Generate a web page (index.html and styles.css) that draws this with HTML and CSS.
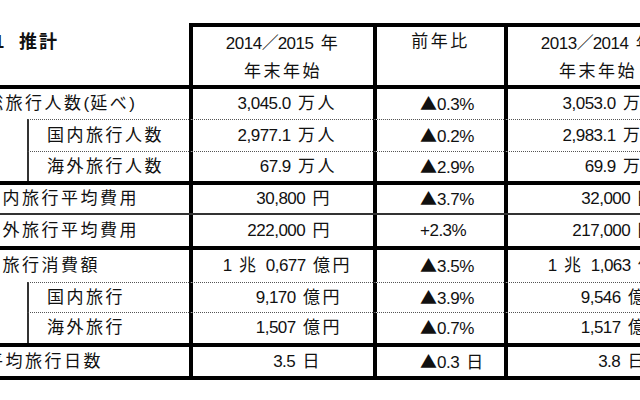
FILE: index.html
```html
<!DOCTYPE html>
<html lang="ja">
<head>
<meta charset="utf-8">
<title>推計</title>
<link rel="stylesheet" href="styles.css">
</head>
<body>
<div class="sheet">
  <div class="row head bk">
    <div class="c c1 title"><span class="tn">表1</span><span class="tt">推計</span></div>
    <div class="c c2 hc"><span><span class="n">2014</span><span class="sl2">／</span><span class="n">2015</span> 年</span><span>年末年始</span></div>
    <div class="c c3 hc"><span>前年比</span></div>
    <div class="c c4 hc h4"><span><span class="n">2013</span><span class="sl2">／</span><span class="n">2014</span> 年</span><span>年末年始</span></div>
  </div>

  <div class="row h30">
    <div class="c c1 la"><span>総旅行人数<span class="par">(</span>延べ<span class="par">)</span></span></div>
    <div class="c c2 p36"><span><span class="n">3,045.0</span> 万人</span></div>
    <div class="c c3"><span><span class="tri">▲</span><span class="n">0.3%</span></span></div>
    <div class="c c4 p36"><span><span class="n">3,053.0</span> 万人</span></div>
  </div>

  <div class="row h32 dt">
    <div class="c c1 sub"><div class="blank"></div><div class="sl">国内旅行人数</div></div>
    <div class="c c2 p36"><span><span class="n">2,977.1</span> 万人</span></div>
    <div class="c c3"><span><span class="tri">▲</span><span class="n">0.2%</span></span></div>
    <div class="c c4 p36"><span><span class="n">2,983.1</span> 万人</span></div>
  </div>

  <div class="row h30 dt bk">
    <div class="c c1 sub"><div class="blank"></div><div class="sl">海外旅行人数</div></div>
    <div class="c c2 p36"><span><span class="n">67.9</span> 万人</span></div>
    <div class="c c3"><span><span class="tri">▲</span><span class="n">2.9%</span></span></div>
    <div class="c c4 p36"><span><span class="n">69.9</span> 万人</span></div>
  </div>

  <div class="row h28 bt">
    <div class="c c1 lb"><span>国内旅行平均費用</span></div>
    <div class="c c2 p41"><span><span class="n">30,800</span> 円</span></div>
    <div class="c c3"><span><span class="tri">▲</span><span class="n">3.7%</span></span></div>
    <div class="c c4 p41"><span><span class="n">32,000</span> 円</span></div>
  </div>

  <div class="row h31 bk">
    <div class="c c1 lb"><span>海外旅行平均費用</span></div>
    <div class="c c2 p41"><span><span class="n">222,000</span> 円</span></div>
    <div class="c c3"><span><span class="n">+2.3%</span></span></div>
    <div class="c c4 p41"><span><span class="n">217,000</span> 円</span></div>
  </div>

  <div class="row h32">
    <div class="c c1 lb"><span>総旅行消費額</span></div>
    <div class="c c2 p21"><span><span class="n">1</span> 兆 <span class="n">0,677</span> 億円</span></div>
    <div class="c c3"><span><span class="tri">▲</span><span class="n">3.5%</span></span></div>
    <div class="c c4 p21"><span><span class="n">1</span> 兆 <span class="n">1,063</span> 億円</span></div>
  </div>

  <div class="row h30 dt">
    <div class="c c1 sub"><div class="blank"></div><div class="sl">国内旅行</div></div>
    <div class="c c2 p31"><span><span class="n">9,170</span> 億円</span></div>
    <div class="c c3"><span><span class="tri">▲</span><span class="n">3.9%</span></span></div>
    <div class="c c4 p31"><span><span class="n">9,546</span> 億円</span></div>
  </div>

  <div class="row h31 dt bk">
    <div class="c c1 sub"><div class="blank"></div><div class="sl">海外旅行</div></div>
    <div class="c c2 p31"><span><span class="n">1,507</span> 億円</span></div>
    <div class="c c3"><span><span class="tri">▲</span><span class="n">0.7%</span></span></div>
    <div class="c c4 p31"><span><span class="n">1,517</span> 億円</span></div>
  </div>

  <div class="row h29 bk">
    <div class="c c1 la"><span>平均旅行日数</span></div>
    <div class="c c2 p51"><span><span class="n">3.5</span> 日</span></div>
    <div class="c c3"><span><span class="tri">▲</span><span class="n">0.3</span> 日</span></div>
    <div class="c c4 p51"><span><span class="n">3.8</span> 日</span></div>
  </div>
</div>
</body>
</html>
```

FILE: styles.css
```css
html, body {
  margin: 0;
  padding: 0;
  background: #fff;
}
body {
  width: 640px;
  height: 400px;
  overflow: hidden;
  color: #111;
  font-family: "Liberation Sans", "Noto Sans CJK JP", sans-serif;
  font-size: 17px;
}
.sheet {
  margin-left: -30px;
  padding-top: 23px;
  width: 728px;
}
.row {
  display: grid;
  grid-template-columns: 219px 184px 131px 194px;
}
.c {
  box-sizing: border-box;
  display: flex;
  align-items: center;
  letter-spacing: 2.5px;
  white-space: nowrap;
  line-height: 20px;
  min-width: 0;
}
.c2, .c3, .c4 {
  border-left: 4px solid #000;
}
.c2, .c4 {
  justify-content: flex-end;
}
.c3 {
  justify-content: flex-start;
  padding-left: 43px;
}
.n {
  letter-spacing: -0.5px;
}
.tri {
  font-family: "Noto Sans CJK JP", sans-serif;
  letter-spacing: 0;
}
.par {
  letter-spacing: 1px;
}

/* header */
.head {
  height: 62px;
}
.head .c2, .head .c3, .head .c4 {
  border-top: 4px solid #000;
  flex-direction: column;
  justify-content: flex-start;
  align-items: center;
  padding: 1px 0 0 0;
  line-height: 28px;
}
.head .h4 {
  padding-right: 10px;
}
.sl2 {
  font-family: "Noto Sans CJK JP", sans-serif;
  letter-spacing: -1px;
}
.title {
  align-items: flex-start;
  padding-top: 5px;
  padding-left: 4px;
  line-height: 28px;
  font-size: 18px;
  font-weight: bold;
  letter-spacing: 2px;
}
.tt {
  margin-left: 13px;
}

/* row heights */
.h28 { height: 28px; }
.h29 { height: 29px; }
.h30 { height: 30px; }
.h31 { height: 31px; }
.h32 { height: 32px; }

/* row rules */
.bk { border-bottom: 4px solid #000; }
.bt { border-bottom: 2px solid #333; }

.dt > .c2, .dt > .c3, .dt > .c4, .dt .sl {
  border-top: 1px dotted #555;
}

/* label column */
.la { padding-left: 16px; }
.lb { padding-left: 13px; }
.c1.sub {
  align-items: stretch;
}
.blank {
  width: 57px;
  flex: none;
}
.sl {
  flex: 1;
  display: flex;
  align-items: center;
  border-left: 2px solid #333;
  padding-left: 18px;
}

/* right padding for right-aligned values */
.p21 { padding-right: 21px; }
.p31 { padding-right: 31px; }
.p36 { padding-right: 36px; }
.p41 { padding-right: 41px; }
.p51 { padding-right: 51px; }
```
